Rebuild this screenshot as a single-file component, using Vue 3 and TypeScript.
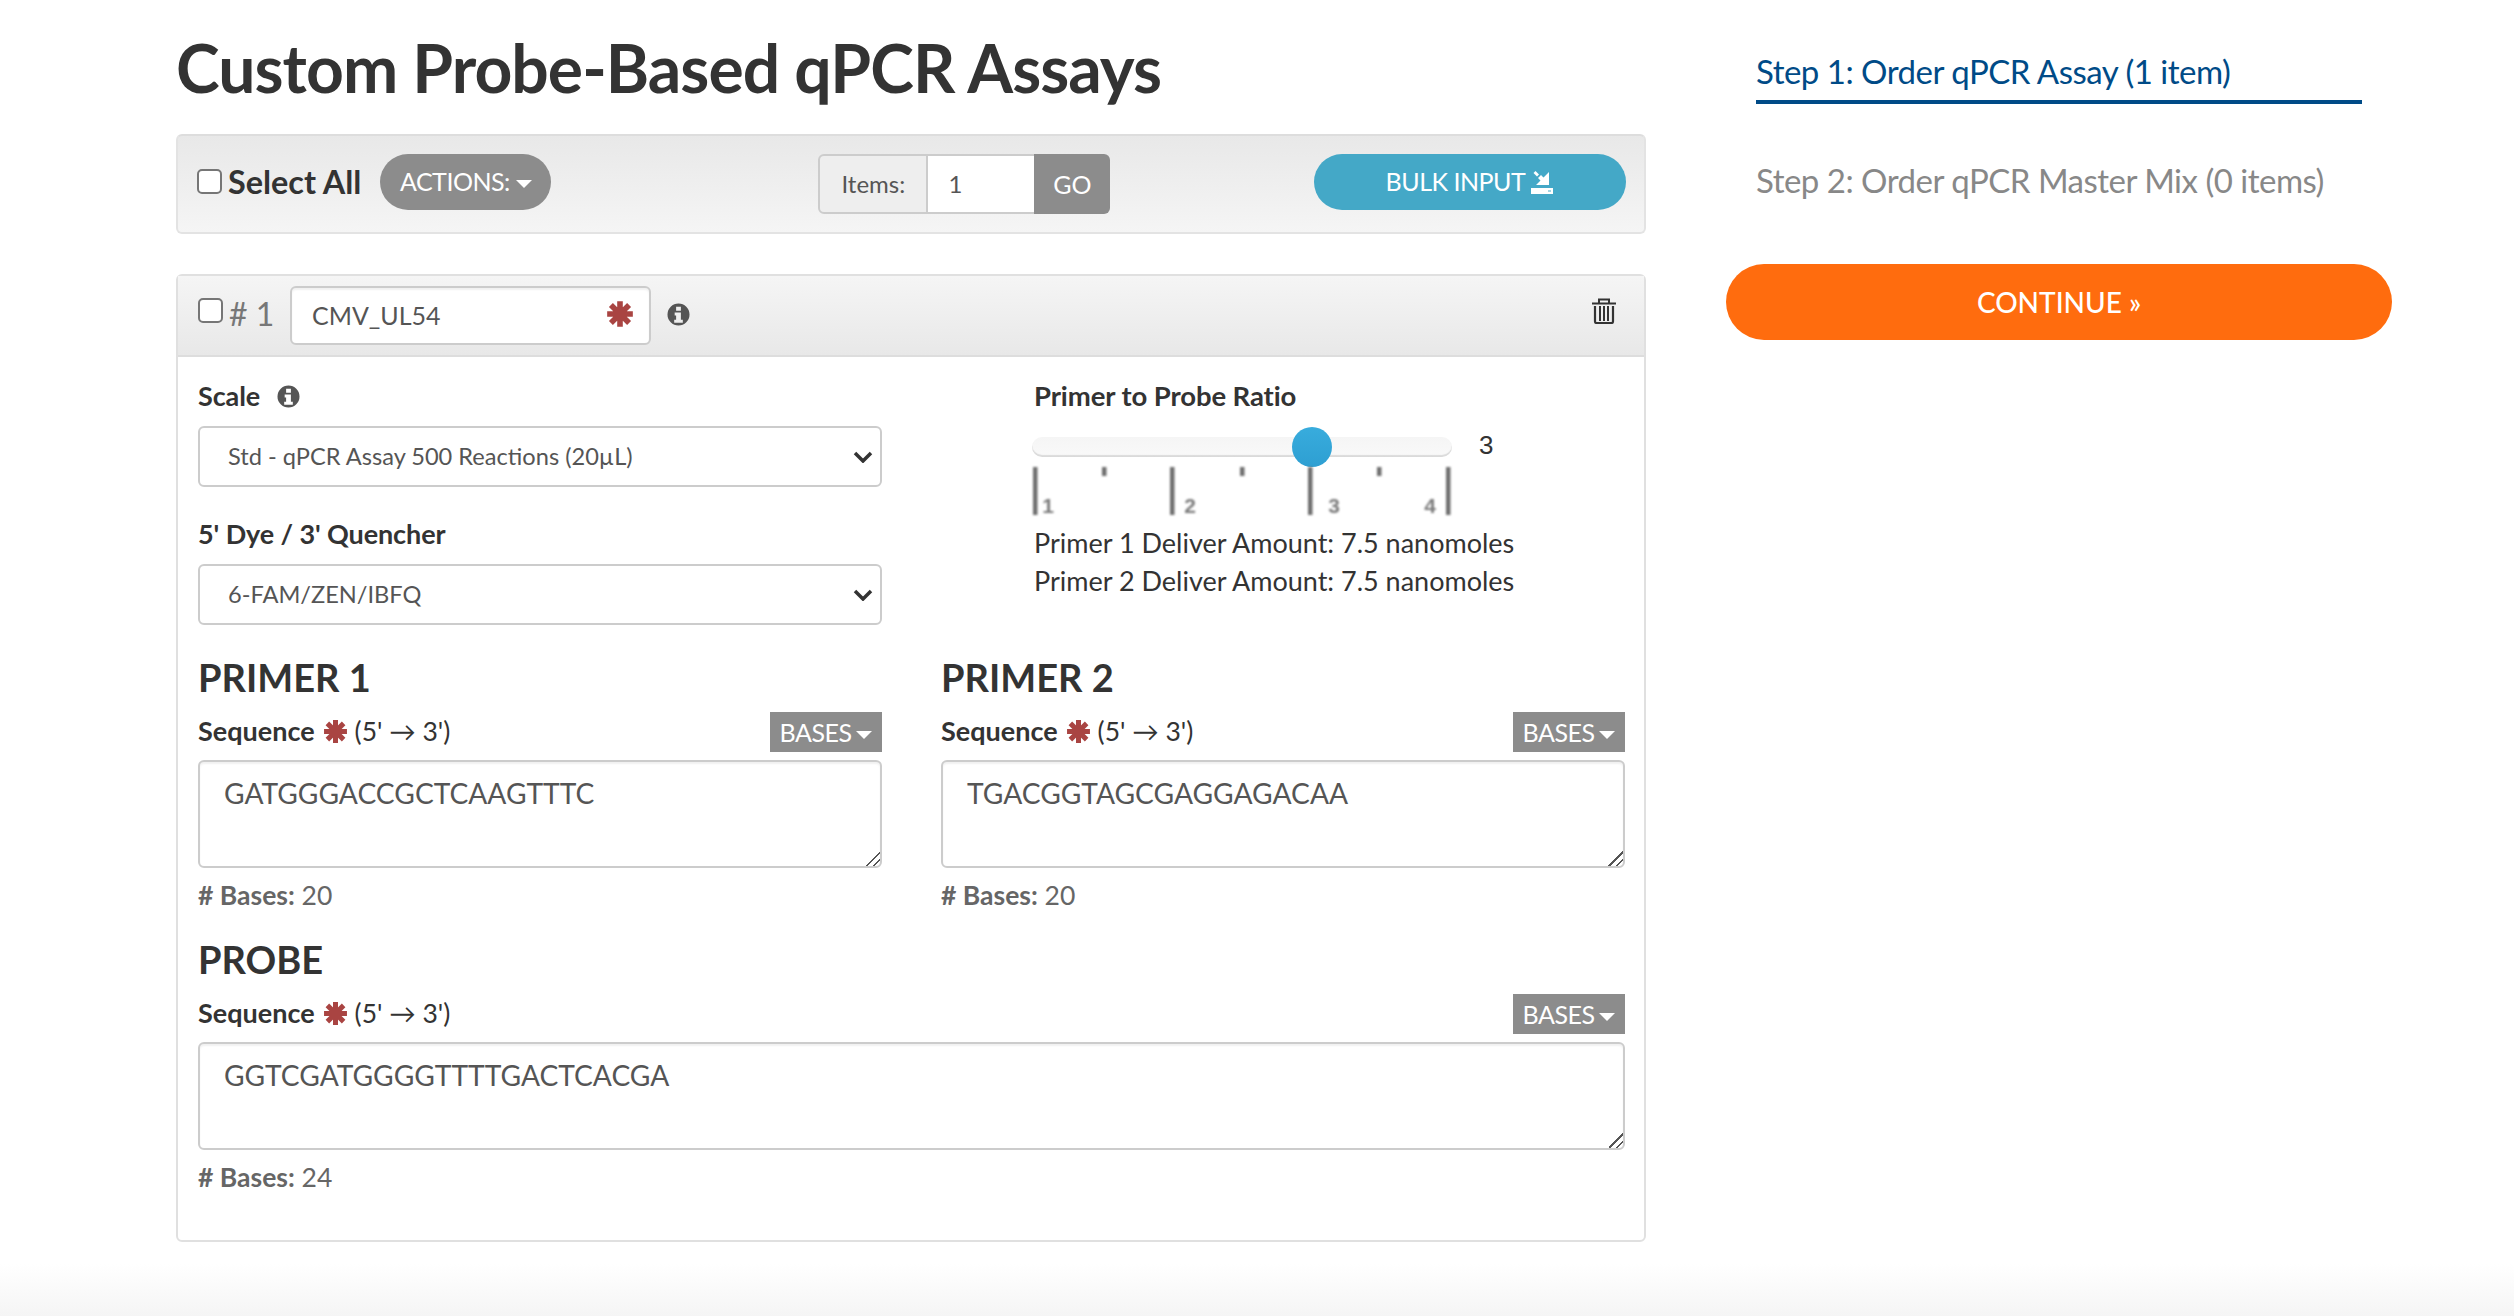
<template>
  <div class="page">
    <div class="main">
      <h1>Custom Probe-Based qPCR Assays</h1>

      <div class="toolbar">
        <label class="select-all"><input type="checkbox" class="check">Select All</label>
        <button class="pill actions">ACTIONS:<span class="caret"></span></button>
        <div class="items-group">
          <span class="items-label">Items:</span>
          <input class="items-input" value="1">
          <button class="go">GO</button>
        </div>
        <button class="pill bulk">
          BULK INPUT
          <svg class="bulk-icon" viewBox="0 0 24 26">
            <path d="M3.500 4l2-2 3.500 3.500-2 2z" />
            <path d="M19 3v13h-13l4.500-4.500-2.500-2.500 3-3 2.500 2.500z" />
            <path fill-rule="evenodd" d="M1 19h22v6h-22zM18 21.500v1h3v-1z" />
          </svg>
        </button>
      </div>

      <div class="panel">
        <div class="panel-head">
          <input type="checkbox" class="check">
          <span class="num"># 1</span>
          <div class="name-wrap">
            <input class="name" value="CMV_UL54">
            <svg class="star star-name" viewBox="0 0 24 24"><path :d="starPath" /></svg>
          </div>
          <svg class="info" viewBox="0 0 24 24"><path :d="infoPath" /></svg>
          <svg class="trash" viewBox="0 0 24 26">
            <path d="M7 4.500V1.500h10v3M0 5.500h24" fill="none" stroke="#333" stroke-width="2" />
            <path d="M3 8v15.500q0 1.500 1.500 1.500h15q1.500 0 1.500-1.500V8" fill="none" stroke="#333" stroke-width="2.200" />
            <path d="M8 8v15M12 8v15M16 8v15" stroke="#333" stroke-width="2" />
          </svg>
        </div>

        <div class="panel-body">
          <div class="options">
            <div class="options-left">
              <label class="field-label">Scale <svg class="info info-small" viewBox="0 0 24 24"><path :d="infoPath" /></svg></label>
              <div class="select-wrap">
                <select><option>Std - qPCR Assay 500 Reactions (20µL)</option></select>
                <svg class="chevron" viewBox="0 0 20 12"><path d="M2 2l8 8 8-8" /></svg>
              </div>
              <label class="field-label second">5' Dye / 3' Quencher</label>
              <div class="select-wrap">
                <select><option>6-FAM/ZEN/IBFQ</option></select>
                <svg class="chevron" viewBox="0 0 20 12"><path d="M2 2l8 8 8-8" /></svg>
              </div>
            </div>
            <div class="options-right">
              <label class="field-label">Primer to Probe Ratio</label>
              <div class="slider-row">
                <div class="track">
                  <div class="thumb"></div>
                </div>
                <span class="slider-value">3</span>
              </div>
              <svg class="ruler" viewBox="0 0 420 56">
                <g fill="#6e6e6e">
                  <rect v-for="x in majors" :key="x" :x="x" y="0" width="4.500" height="48" />
                  <rect v-for="x in minors" :key="x" :x="x" y="0" width="4.500" height="9" />
                </g>
                <g class="ruler-nums">
                  <text x="16" y="46">1</text>
                  <text x="158" y="46">2</text>
                  <text x="302" y="46">3</text>
                  <text x="398" y="46">4</text>
                </g>
              </svg>
              <div class="deliver">Primer 1 Deliver Amount: 7.5 nanomoles</div>
              <div class="deliver">Primer 2 Deliver Amount: 7.5 nanomoles</div>
            </div>
          </div>

          <div class="primers">
            <section v-for="s in primers" :key="s.title" class="seq" :class="{ wide: s.wide }">
              <h2>{{ s.title }}</h2>
              <div class="seq-row">
                <span class="seq-label"><b>Sequence</b><svg class="star star-seq" viewBox="0 0 24 24"><path :d="starPath" /></svg>(5' → 3')</span>
                <button class="bases">BASES<span class="caret small"></span></button>
              </div>
              <textarea :value="s.seq"></textarea>
              <div class="count"><b># Bases:</b> {{ s.seq.length }}</div>
            </section>
          </div>
        </div>
      </div>
    </div>

    <aside class="side">
      <div class="step active">Step 1: Order qPCR Assay (1 item)</div>
      <div class="step">Step 2: Order qPCR Master Mix (0 items)</div>
      <button class="continue">CONTINUE »</button>
    </aside>
  </div>
  <div class="foot"></div>
</template>

<script setup lang="ts">
interface Primer {
  title: string
  seq: string
  wide?: boolean
}

const primers: Primer[] = [
  { title: 'PRIMER 1', seq: 'GATGGGACCGCTCAAGTTTC' },
  { title: 'PRIMER 2', seq: 'TGACGGTAGCGAGGAGACAA' },
  { title: 'PROBE', seq: 'GGTCGATGGGGTTTTGACTCACGA', wide: true },
];

const majors = [1, 138, 276, 414];
const minors = [70, 208, 345];

// same asterisk in the name field and next to each Sequence label
const starPath = 'M12 1v22M1 12h22M4.200 4.200l15.600 15.600M19.800 4.200L4.200 19.800';
const infoPath = 'M12 0.500a11.500 11.500 0 1 0 0 23 11.500 11.500 0 0 0 0-23zM9.500 4h5v4h-5zM8 10h6.500v7.500h2v3h-9v-3h2v-4.500h-1.500z';
</script>

<style scoped>
.page {
  display: flex;
  align-items: flex-start;
  padding-left: 176px;
  font-family: Lato, "Liberation Sans", sans-serif;
  color: #333;
}

.main {
  width: 1470px;
  flex: none;
}

h1 {
  margin: 0;
  padding-top: 26px;
  height: 134px;
  box-sizing: border-box;
  font-size: 66px;
  line-height: 84px;
  font-weight: 700;
  color: #333;
  letter-spacing: -0.95px;
}

.toolbar {
  height: 100px;
  box-sizing: border-box;
  display: flex;
  align-items: flex-start;
  padding: 18px 18px 0 19px;
  background: linear-gradient(#e8e8e8, #f5f5f5);
  border: 2px solid #e3e3e3;
  border-top-color: #ddd;
  border-radius: 6px;
}

.check {
  appearance: none;
  width: 25px;
  height: 25px;
  margin: 0;
  flex: none;
  background: #fff;
  border: 2px solid #767676;
  border-radius: 5px;
}

.select-all {
  display: flex;
  align-items: center;
  gap: 6px;
  height: 56px;
  font-size: 32.400px;
  font-weight: 700;
  color: #333;
  margin-top: -1px;
  margin-bottom: 1px;
}

.pill {
  height: 56px;
  border: 0;
  border-radius: 28px;
  color: #fff;
  font-family: inherit;
  font-size: 25px;
  padding: 0 0 2px;
}

.actions {
  width: 171px;
  margin-left: 19px;
  background: #8c8c8c;
  letter-spacing: -0.5px;
}

.caret {
  display: inline-block;
  margin-left: 6px;
  vertical-align: 3px;
  border-left: 8px solid transparent;
  border-right: 8px solid transparent;
  border-top: 8px solid #fff;
}

.caret.small {
  margin-left: 5px;
}

.items-group {
  display: flex;
  height: 60px;
  width: 292px;
  margin-left: 267px;
  box-sizing: border-box;
}

.items-label {
  width: 110px;
  box-sizing: border-box;
  display: flex;
  align-items: center;
  justify-content: center;
  padding-bottom: 2px;
  background: #eee;
  border: 2px solid #ccc;
  border-radius: 6px 0 0 6px;
  font-size: 24px;
  color: #555;
}

.items-input {
  width: 106px;
  box-sizing: border-box;
  border: 2px solid #ccc;
  border-left: 0;
  border-right: 0;
  padding: 0 20px 2px;
  outline: 0;
  font-family: inherit;
  font-size: 24px;
  color: #555;
}

.go {
  width: 76px;
  border: 0;
  background: #8c8c8c;
  color: #fff;
  border-radius: 0 6px 6px 0;
  font-family: inherit;
  font-size: 25px;
}

.bulk {
  width: 312px;
  margin-left: auto;
  background: #44a8c7;
  letter-spacing: -0.5px;
}

.bulk-icon {
  width: 24px;
  height: 26px;
  fill: #fff;
  vertical-align: -4px;
}

.panel {
  margin-top: 40px;
  height: 968px;
  box-sizing: border-box;
  border: 2px solid #e0e0e0;
  border-radius: 6px;
}

.panel-head {
  height: 81px;
  box-sizing: border-box;
  display: flex;
  align-items: center;
  padding: 0 28px 0 20px;
  background: linear-gradient(#f5f5f5, #e8e8e8);
  border-bottom: 2px solid #ddd;
}

.panel-head .check {
  margin-bottom: 10px;
}

.num {
  margin: 0 0 5px 6px;
  font-size: 32px;
  color: #777;
  width: 61px;
}

.name-wrap {
  position: relative;
  width: 361px;
}

.name {
  display: block;
  width: 100%;
  height: 59px;
  box-sizing: border-box;
  padding: 0 20px 2px;
  border: 2px solid #ccc;
  border-radius: 6px;
  outline: 0;
  font-family: inherit;
  font-size: 25px;
  color: #555;
  box-shadow: inset 0 2px 2px rgba(0, 0, 0, 0.06);
}

.star {
  fill: none;
  stroke: #a94442;
  stroke-width: 4.800;
}

.star-name {
  position: absolute;
  right: 17px;
  top: 14px;
  width: 28px;
  height: 28px;
}

.info {
  width: 23px;
  height: 23px;
  margin: 0 0 2px 16px;
  fill: #555;
}

.info-small {
  margin: 0 0 0 10px;
  vertical-align: -2px;
}

.trash {
  width: 24px;
  height: 26px;
  margin: 0 0 10px auto;
}

.panel-body {
  padding: 22px 20px 0 20px;
}

.options {
  display: flex;
  height: 246px;
}

.options-left {
  width: 684px;
}

.options-right {
  margin-left: 152px;
  width: 560px;
}

.field-label {
  display: block;
  height: 47px;
  font-size: 27px;
  line-height: 34px;
  font-weight: 700;
  color: #333;
  letter-spacing: -0.1px;
}

.field-label.second {
  margin-top: 30px;
}

.options-right .field-label {
  height: 46px;
  font-size: 27.500px;
}

.select-wrap {
  position: relative;
}

select {
  appearance: none;
  display: block;
  width: 100%;
  height: 61px;
  box-sizing: border-box;
  padding: 0 28px 2px;
  background: #fff;
  border: 2px solid #ccc;
  border-radius: 6px;
  font-family: inherit;
  font-size: 23.600px;
  color: #555;
}

.chevron {
  position: absolute;
  right: 9px;
  top: 25px;
  width: 20px;
  height: 12px;
  fill: none;
  stroke: #333;
  stroke-width: 3.500;
  pointer-events: none;
}

.slider-row {
  display: flex;
  align-items: center;
  height: 40px;
  margin: 2px 0 0 -2px;
}

.track {
  position: relative;
  width: 420px;
  height: 20px;
  background: linear-gradient(#f5f5f5, #f9f9f9);
  border-radius: 10px;
  box-shadow: inset 0 -2px 1px rgba(0, 0, 0, 0.12);
}

.thumb {
  position: absolute;
  left: 260px;
  top: -10px;
  width: 40px;
  height: 40px;
  border-radius: 50%;
  background: linear-gradient(#38acdd, #2e9fd2);
}

.slider-value {
  margin: 0 0 4px 27px;
  font-family: "Liberation Sans", sans-serif;
  font-size: 26px;
  color: #333;
}

.ruler {
  display: block;
  width: 420px;
  height: 56px;
  margin-left: -2px;
  filter: blur(0.8px);
}

.ruler-nums {
  font-family: "Liberation Sans", sans-serif;
  font-size: 21px;
  font-weight: 700;
  fill: #7a7a7a;
  text-anchor: middle;
}

.deliver {
  font-size: 27px;
  line-height: 38px;
  color: #333;
  white-space: nowrap;
}

.ruler + .deliver {
  margin-top: 1px;
}

.primers {
  display: grid;
  grid-template-columns: 684px 684px;
  column-gap: 59px;
  margin-top: 29px;
}

.seq {
  height: 282px;
}

.seq.wide {
  grid-column: 1 / 3;
}

h2 {
  margin: 0;
  font-size: 38px;
  line-height: 46px;
  font-weight: 700;
  color: #333;
}

.seq-row {
  display: flex;
  justify-content: space-between;
  align-items: center;
  height: 40px;
  margin-top: 12px;
}

.seq-label {
  margin-bottom: 4px;
  font-size: 26.500px;
  color: #333;
}

.seq-label b {
  font-size: 27px;
}

.star-seq {
  width: 25px;
  height: 25px;
  margin: 0 7px 0 8px;
  vertical-align: -3px;
}

.bases {
  width: 112px;
  height: 40px;
  padding: 0;
  border: 0;
  background: #8c8c8c;
  color: #fff;
  font-family: inherit;
  font-size: 25px;
  letter-spacing: -0.5px;
}

textarea {
  display: block;
  width: 100%;
  height: 108px;
  box-sizing: border-box;
  margin-top: 8px;
  padding: 12px 24px;
  border: 2px solid #ccc;
  border-radius: 6px;
  outline: 0;
  font-family: inherit;
  font-size: 28.200px;
  line-height: 38px;
  color: #555;
  box-shadow: inset 0 2px 2px rgba(0, 0, 0, 0.06);
}

textarea::-webkit-resizer {
  background: linear-gradient(135deg, transparent 50%, #555 50% 57%, transparent 57% 74%, #555 74% 81%, transparent 81%);
}

.count {
  margin-top: 10px;
  font-size: 26.500px;
  line-height: 34px;
  color: #666;
}

.side {
  width: 666px;
  margin-left: 80px;
  flex: none;
  padding-top: 47px;
}

.step {
  margin: 0 30px;
  font-size: 33px;
  line-height: 48px;
  color: #888;
  letter-spacing: -0.5px;
}

.step.active {
  height: 57px;
  box-sizing: border-box;
  color: #004b87;
  border-bottom: 4px solid #004b87;
  margin-bottom: 52px;
}

.continue {
  display: block;
  width: 666px;
  height: 76px;
  margin-top: 60px;
  padding-bottom: 2px;
  border: 0;
  border-radius: 38px;
  background: #ff6c0e;
  color: #fff;
  font-family: inherit;
  font-size: 28px;
  font-weight: 500;
}

.foot {
  margin-top: 22px;
  height: 52px;
  background: linear-gradient(#fff, #f5f5f5);
}
</style>

<style>
html, body {
  background: #fff;
}
</style>
